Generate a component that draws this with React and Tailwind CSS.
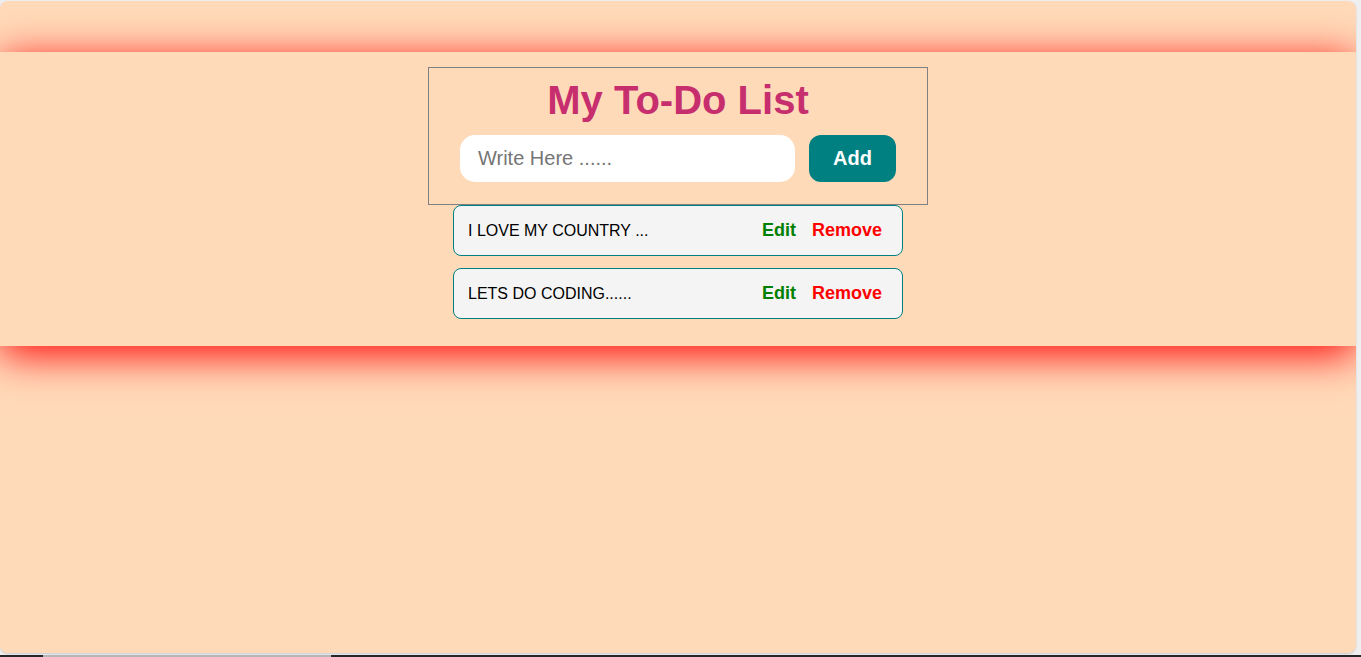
export default function App() {
  const todos = ['I LOVE MY COUNTRY ...', 'LETS DO CODING......'];

  return (
    <div className="flex h-[657px] w-full flex-col bg-[#efefef] overflow-hidden font-['Liberation_Sans',Arial,sans-serif]">
      <div className="mt-px mr-[5px] h-[652px] rounded-lg bg-[#ffdab9] overflow-hidden shadow-[0_1px_2px_rgba(0,0,0,0.15)]">
        <div className="mt-[51px] bg-[#ffdab9] pt-[15px] pb-[27px] shadow-[0_8px_40px_#ff0000]">
          <div className="mx-auto w-[500px] border border-[#808080] pt-[9px] pb-[22px]">
            <h1 className="text-center text-[40px] font-bold leading-[46px] text-[#c72e6e]">
              My To-Do List
            </h1>
            <div className="mt-[12px] flex justify-center gap-[14px]">
              <input
                type="text"
                placeholder="Write Here ......"
                className="h-[47px] w-[335px] rounded-[15px] bg-white pl-[18px] text-[20px] text-black outline-none placeholder:text-[#757575]"
              />
              <button className="h-[47px] w-[87px] rounded-[12px] bg-[#008080] pb-px text-[20px] font-bold text-white">
                Add
              </button>
            </div>
          </div>
          <div className="mx-auto flex w-[450px] flex-col gap-[12px]">
            {todos.map((t) => (
              <div
                key={t}
                className="flex h-[51px] items-center justify-between rounded-lg border border-[#008080] bg-[#f4f4f4] pl-[14px] pr-[20px]"
              >
                <span className="text-[16px] text-black">{t}</span>
                <div className="flex gap-4 text-[18px] font-bold">
                  <button className="text-[#008000]">Edit</button>
                  <button className="text-[#ff0000]">Remove</button>
                </div>
              </div>
            ))}
          </div>
        </div>
      </div>
      <div className="mt-auto flex h-[2px] bg-[#262626]">
        <div className="ml-[43px] w-[288px] bg-[#b5b5b5]" />
      </div>
    </div>
  );
}
